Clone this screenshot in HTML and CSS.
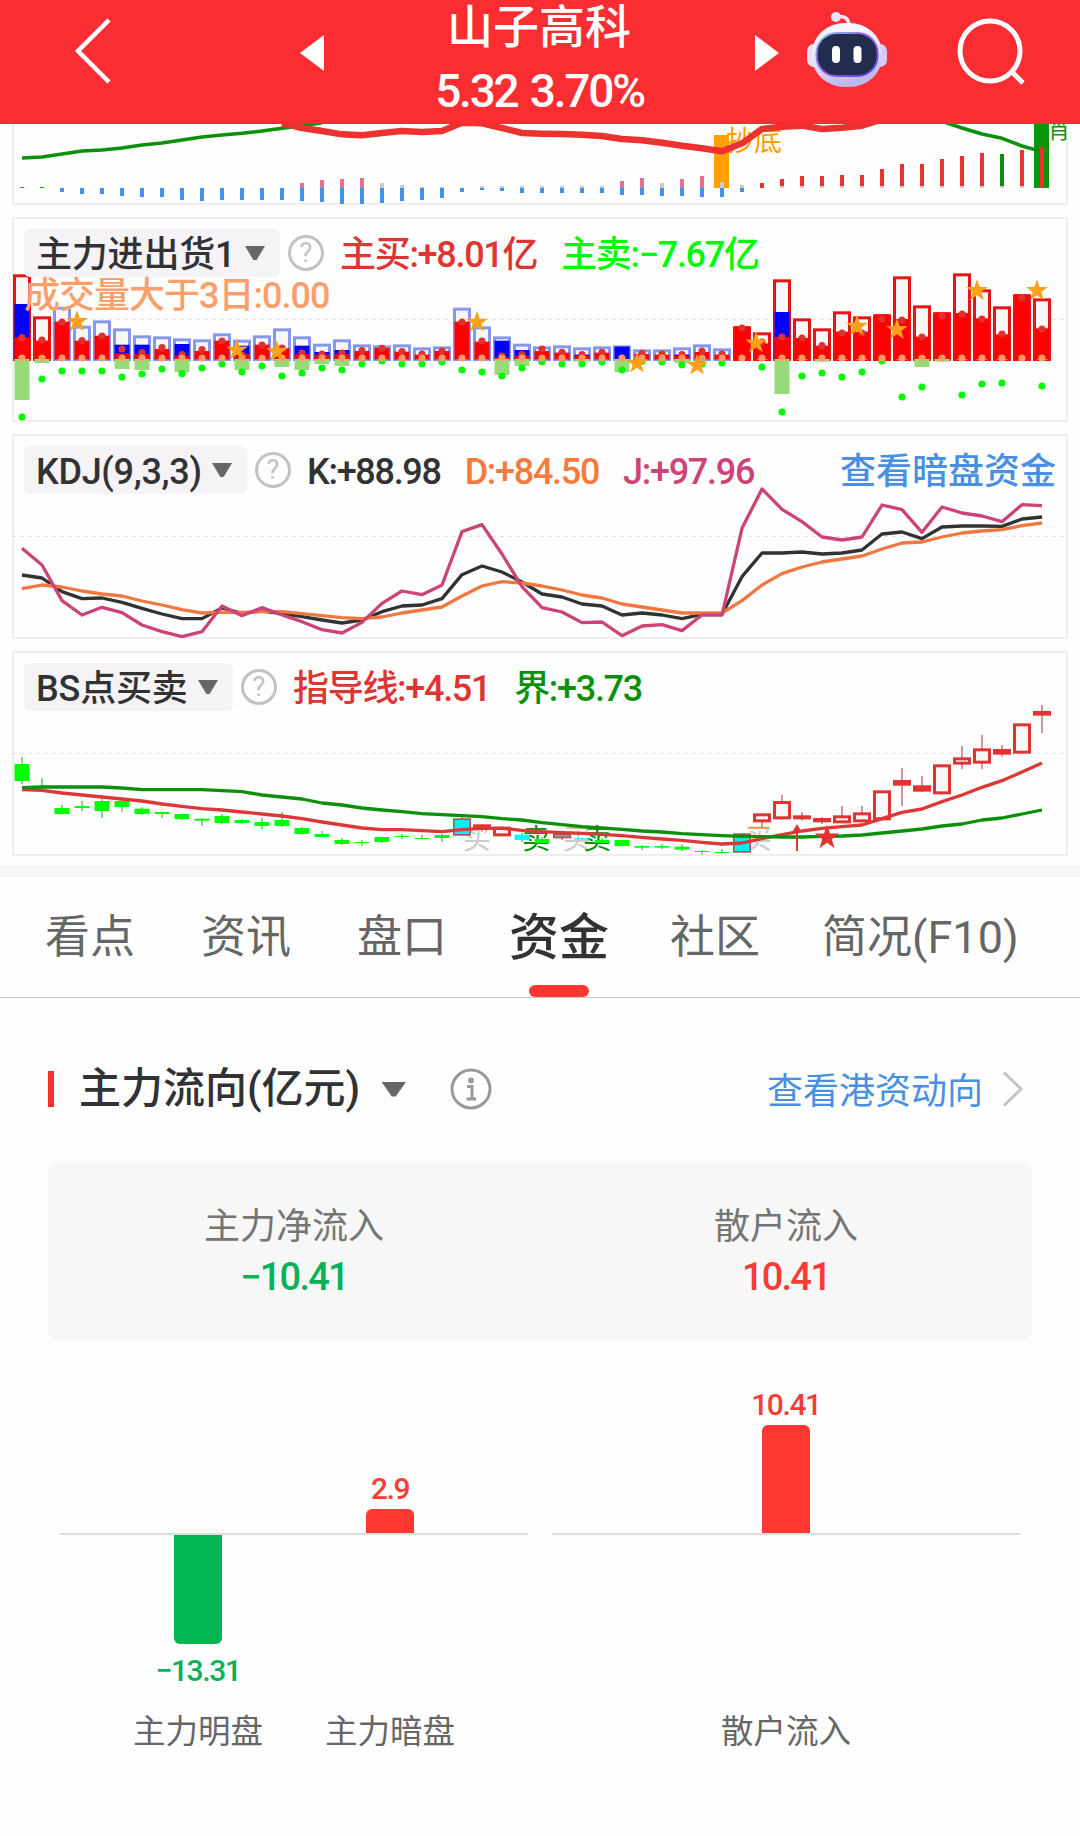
FILE: index.html
```html
<!DOCTYPE html>
<html lang="zh-CN">
<head>
<meta charset="UTF-8">
<meta name="viewport" content="width=device-width, initial-scale=1.0">
<title>山子高科</title>
<link rel="stylesheet" href="styles.css">
</head>
<body>

<header class="topbar">
  <svg class="back" width="40" height="70" viewBox="0 0 40 70"><path d="M36 4 L5 35 L36 66" fill="none" stroke="#fff" stroke-width="4.5"/></svg>
  <svg class="prev" width="24" height="36" viewBox="0 0 24 36"><path d="M0 18 L24 0 V36 Z" fill="#fff"/></svg>
  <div class="stock">
    <div class="stock-name">山子高科</div>
    <div class="stock-price">5.32 3.70%</div>
  </div>
  <svg class="next" width="24" height="36" viewBox="0 0 24 36"><path d="M24 18 L0 0 V36 Z" fill="#fff"/></svg>
  <svg class="robot" width="82" height="78" viewBox="0 0 82 78">
    <defs>
      <linearGradient id="shell" x1="0" y1="0" x2="0.3" y2="1">
        <stop offset="0" stop-color="#ffffff"/>
        <stop offset="0.55" stop-color="#e9e5fa"/>
        <stop offset="1" stop-color="#bdb9ee"/>
      </linearGradient>
      <linearGradient id="rim" x1="0" y1="0" x2="1" y2="1">
        <stop offset="0" stop-color="#7fd3ee"/>
        <stop offset="0.5" stop-color="#9a4fe0"/>
        <stop offset="1" stop-color="#5a48e0"/>
      </linearGradient>
    </defs>
    <path d="M30 6 Q43 3 43 16" fill="none" stroke="#eeeafa" stroke-width="3.5"/>
    <circle cx="30" cy="6" r="5" fill="#e9e4f8"/>
    <rect x="1" y="33" width="16" height="23" rx="7" fill="#e4e0f8"/>
    <rect x="65" y="33" width="16" height="23" rx="7" fill="#d2cdf4"/>
    <rect x="6" y="12" width="70" height="64" rx="33" ry="30" fill="url(#shell)"/>
    <rect x="10.500" y="22" width="61" height="43" rx="20" fill="#222c4e" stroke="url(#rim)" stroke-width="2"/>
    <rect x="26" y="35" width="8" height="17" rx="4" fill="#fff"/>
    <rect x="47.500" y="35" width="8" height="17" rx="4" fill="#fff"/>
  </svg>
  <svg class="search" width="70" height="70" viewBox="0 0 70 70"><circle cx="33" cy="33" r="30" fill="none" stroke="#fff" stroke-width="5"/><path d="M54 53 L66 65" stroke="#fff" stroke-width="5"/></svg>
</header>

<main>
  <section class="panel panel-cut">
    <svg class="chart" id="chart-trend" width="1056" height="81"></svg>
  </section>

  <section class="panel">
    <svg class="chart" id="chart-volume" width="1056" height="205"></svg>
    <div class="legend">
      <span class="picker"><span class="name">主力进出货1</span><i class="caret"></i></span>
      <span class="help">?</span>
      <span class="val red">主买:+8.01亿</span>
      <span class="val lime">主卖:−7.67亿</span>
    </div>
    <div class="legend-extra">成交量大于3日:0.00</div>
  </section>

  <section class="panel">
    <svg class="chart" id="chart-kdj" width="1056" height="205"></svg>
    <div class="legend">
      <span class="picker picker-kdj"><span class="name">KDJ(9,3,3)</span><i class="caret"></i></span>
      <span class="help">?</span>
      <span class="val dark">K:+88.98</span>
      <span class="val orange">D:+84.50</span>
      <span class="val pink">J:+97.96</span>
      <a class="legend-link">查看暗盘资金</a>
    </div>
  </section>

  <section class="panel">
    <svg class="chart" id="chart-bs" width="1056" height="205"></svg>
    <div class="legend">
      <span class="picker picker-bs"><span class="name">BS点买卖</span><i class="caret"></i></span>
      <span class="help">?</span>
      <span class="val red">指导线:+4.51</span>
      <span class="val green">界:+3.73</span>
    </div>
  </section>

  <nav class="tabs">
    <a class="tab">看点</a>
    <a class="tab">资讯</a>
    <a class="tab">盘口</a>
    <a class="tab active">资金</a>
    <a class="tab">社区</a>
    <a class="tab tab-last">简况(F10)</a>
  </nav>

  <section class="flow">
    <div class="flow-head">
      <i class="mark"></i>
      <h2>主力流向(亿元)</h2>
      <i class="caret caret-lg"></i>
      <svg class="info" width="42" height="42" viewBox="0 0 42 42">
        <circle cx="21" cy="21" r="19" fill="none" stroke="#999" stroke-width="3"/>
        <circle cx="21" cy="12.500" r="3" fill="#999"/>
        <path d="M17 18.500 H22 V31 M16.500 31 H26" fill="none" stroke="#999" stroke-width="3"/>
      </svg>
      <a class="flow-link">查看港资动向</a>
      <svg class="arrow" width="22" height="36" viewBox="0 0 22 36"><path d="M2 1.500 L19 18 L2 34.500" fill="none" stroke="#c4c4c4" stroke-width="3"/></svg>
    </div>

    <div class="summary">
      <div class="summary-item">
        <div class="summary-label">主力净流入</div>
        <div class="summary-num down">−10.41</div>
      </div>
      <div class="summary-item">
        <div class="summary-label">散户流入</div>
        <div class="summary-num up">10.41</div>
      </div>
    </div>

    <div class="plots">
      <div class="plot">
        <div class="plot-up">
          <div class="col"></div>
          <div class="col"><span class="num up">2.9</span><i class="bar bar-up" style="height:24px"></i></div>
        </div>
        <div class="plot-down">
          <div class="col"><i class="bar bar-down" style="height:109px"></i><span class="num down">−13.31</span></div>
          <div class="col"></div>
        </div>
        <div class="plot-names"><span class="col">主力明盘</span><span class="col">主力暗盘</span></div>
      </div>
      <div class="plot">
        <div class="plot-up">
          <div class="col"><span class="num up">10.41</span><i class="bar bar-up" style="height:108px"></i></div>
        </div>
        <div class="plot-down"><div class="col"></div></div>
        <div class="plot-names"><span class="col">散户流入</span></div>
      </div>
    </div>
  </section>
</main>

<script src="charts.js"></script>
</body>
</html>
```

FILE: styles.css
```css
* {
  box-sizing: border-box;
}

body {
  margin: 0;
  width: 1080px;
  height: 1836px;
  overflow: hidden;
  background: #fefefe;
  color: #303233;
  font-family: Roboto, "Noto Sans CJK SC", sans-serif;
}

i {
  font-style: normal;
}

h2 {
  margin: 0;
}

/* top bar */
.topbar {
  display: flex;
  align-items: flex-start;
  height: 124px;
  background: #fa2d32;
  color: #fff;
}

.back {
  margin: 16px 0 0 73px;
}

.prev {
  margin: 35px 0 0 187px;
}

.stock {
  width: 431px;
  text-align: center;
  white-space: nowrap;
}

.stock-name {
  height: 60px;
  padding-right: 1px;
  font-size: 46px;
  font-weight: 500;
  line-height: 55px;
}

.stock-price {
  font-size: 46px;
  line-height: 62px;
  font-weight: 500;
  letter-spacing: -2.2px;
  word-spacing: 3px;
}

.next {
  margin-top: 35px;
}

.robot {
  margin: 11px 0 0 27px;
}

.search {
  margin: 18px 0 0 69px;
}

/* indicator panels */
.panel {
  position: relative;
  height: 205px;
  margin: 0 12px 12px;
  border: 2px solid #eee;
}

.panel-cut {
  height: 81px;
  border-top: 0;
}

.chart {
  position: absolute;
  top: -2px;
  left: -2px;
}

.panel-cut .chart {
  top: 0;
}

.legend {
  position: relative;
  display: flex;
  align-items: center;
  height: 48px;
  margin: 10px 10px 0;
  font-size: 36px;
  font-weight: 500;
  line-height: 48px;
  white-space: nowrap;
}

.picker {
  display: flex;
  align-items: center;
  justify-content: space-between;
  width: 256px;
  height: 48px;
  padding: 0 15px 0 12px;
  border-radius: 6px;
  background: #f6f3f7;
}

.name,
.val,
.legend-link {
  padding-top: 3px;
}

.name {
  letter-spacing: -0.2px;
}

.picker-kdj {
  width: 223px;
}

.picker-kdj .name {
  letter-spacing: -0.3px;
}

.picker-bs {
  width: 209px;
}

.caret {
  width: 20px;
  height: 14px;
  background: #666;
  clip-path: polygon(0 0, 100% 0, 58% 100%, 42% 100%);
}

.help {
  width: 36px;
  height: 36px;
  margin: 0 16px 0 8px;
  border: 3px solid #c2c2c2;
  border-radius: 50%;
  color: #c2c2c2;
  font-size: 27px;
  font-weight: 400;
  line-height: 31px;
  text-align: center;
}

.val {
  margin-right: 24px;
  letter-spacing: -1.3px;
}

.legend-link {
  margin-left: auto;
  color: #4a90e2;
}

.legend-extra {
  position: relative;
  margin: -4px 0 0 10px;
  color: #fa9f6b;
  font-size: 36px;
  font-weight: 500;
  line-height: 46px;
  letter-spacing: -1px;
}

.red { color: #e03434; }
.lime { color: #00fa00; }
.dark { color: #303233; }
.orange { color: #f57a3d; }
.pink { color: #cc4378; }
.green { color: #0a900a; }

/* tabs */
.tabs {
  display: flex;
  height: 133px;
  margin-top: -3px;
  padding: 0 45px;
  border-top: 12px solid #f6f6f6;
  border-bottom: 1px solid #c8c8c8;
  white-space: nowrap;
}

.tab {
  margin-right: 66px;
  color: #666;
  font-size: 45px;
  line-height: 122px;
}

.tab.active {
  position: relative;
  margin: 0 61px 0 -4px;
  color: #303233;
  font-size: 50px;
  font-weight: 500;
}

.tab.active::after {
  content: "";
  position: absolute;
  left: 50%;
  bottom: 0;
  width: 60px;
  height: 12px;
  margin-left: -30px;
  border-radius: 6px;
  background: #ff3932;
}

.tab-last {
  margin: 0 0 0 -4px;
}

/* capital flow */
.flow-head {
  display: flex;
  align-items: center;
  height: 60px;
  margin: 61px 56px 0 48px;
}

.mark {
  width: 6px;
  height: 36px;
  margin-right: 25px;
  background: #f5302e;
}

.flow-head h2 {
  font-size: 42px;
  font-weight: 500;
  line-height: 60px;
}

.caret-lg {
  width: 25px;
  height: 15px;
  margin-left: 21px;
}

.info {
  margin-left: 44px;
}

.flow-link {
  margin: -3px 19px 0 auto;
  color: #4a90e2;
  font-size: 36px;
}

.summary {
  display: flex;
  height: 180px;
  margin: 42px 48px 0;
  padding-top: 42px;
  border-radius: 12px;
  background: #f7f7f7;
  text-align: center;
}

.summary-item {
  width: 492px;
}

.summary-label {
  color: #757575;
  font-size: 36px;
  line-height: 48px;
}

.summary-num {
  font-size: 38px;
  font-weight: 500;
  line-height: 52px;
  letter-spacing: -1.8px;
}

.up { color: #f53c35; }
.down { color: #07b155; }

.plots {
  display: flex;
  gap: 24px;
  padding: 0 60px;
}

.plot {
  width: 468px;
}

.plot-up,
.plot-down,
.plot-names {
  display: flex;
  justify-content: center;
}

.plot-up {
  height: 194px;
  border-bottom: 2px solid #ddd;
}

.plot-down {
  height: 173px;
}

.col {
  display: flex;
  flex-direction: column;
  align-items: center;
  width: 192px;
}

.plot-up .col {
  justify-content: flex-end;
}

.num {
  font-size: 30px;
  font-weight: 500;
  line-height: 38px;
  letter-spacing: -1.4px;
}

.plot-up .num {
  margin-bottom: 1px;
}

.plot-down .num {
  margin-top: 8px;
}

.bar {
  width: 48px;
}

.bar-up {
  border-radius: 6px 6px 0 0;
  background: #ff3932;
}

.bar-down {
  border-radius: 0 0 6px 6px;
  background: #00b652;
}

.plot-names {
  color: #666;
  font-size: 32.5px;
  line-height: 48px;
}
```

FILE: charts.js
```javascript
// every chart has 52 columns, 20px apart; heights are stored in thirds of a pixel
var STEP = 20;
var FIRST = 10;

function colX(i) {
  return FIRST + i * STEP;
}

function Chart(id, offset) {
  this.el = document.getElementById(id);
  this.offset = offset;
}

Chart.prototype.y = function(v) {
  return v / 3 - this.offset;
};

Chart.prototype.add = function(name, attrs, text) {
  var node = document.createElementNS("http://www.w3.org/2000/svg", name);
  for (var key in attrs) {
    node.setAttribute(key, attrs[key]);
  }
  if (text) {
    node.textContent = text;
  }
  this.el.appendChild(node);
};

Chart.prototype.rect = function(x, top, w, bottom, color) {
  this.add("rect", { x: x, y: this.y(top), width: w, height: (bottom - top) / 3, fill: color });
};

Chart.prototype.line = function(values, color, width, start) {
  var self = this;
  var points = values.map(function(v, i) {
    return colX(i + (start || 0)) + "," + self.y(v);
  }).join(" ");
  this.add("polyline", { points: points, fill: "none", stroke: color, "stroke-width": width, "stroke-linejoin": "round" });
};

Chart.prototype.dash = function(v) {
  this.add("line", { x1: 0, x2: 1056, y1: this.y(v), y2: this.y(v), stroke: "#ddd", "stroke-width": 1, "stroke-dasharray": "4 4" });
};

Chart.prototype.star = function(x, v, r, color) {
  var points = [];
  for (var k = 0; k < 10; k++) {
    var a = Math.PI * k / 5 - Math.PI / 2;
    var d = k % 2 ? r * 0.39 : r;
    points.push((x + d * Math.cos(a)).toFixed(1) + "," + (this.y(v) + d * Math.sin(a)).toFixed(1));
  }
  this.add("polygon", { points: points.join(" "), fill: color });
};

Chart.prototype.label = function(x, v, size, color, text) {
  this.add("text", { x: x, y: this.y(v), "font-size": size, fill: color }, text);
};

// trend
var trend = new Chart("chart-trend", 124);
trend.rect(702, 405, 15, 564, "#ff9f00");
trend.rect(1022, 360, 15, 564, "#0a960a");
trend.label(714, 452, 28, "#ff9f00", "抄底");
trend.label(1036, 414, 22, "#0a960a", "肖");
trend.line([474, 471, 462, 453, 450, 444, 435, 429, 420, 411, 405, 400, 393, 385, 378, 368], "#0a900a", 3.5);
trend.line([364, 384, 402, 415, 438, 455], "#0a900a", 3.5, 46);
trend.line([369, 384, 393, 403, 406, 399, 393, 396, 393, 368, 370, 384, 399, 401, 402, 404, 408, 417, 421, 428, 437, 445, 454, 430, 387, 380, 377, 387, 383, 377, 358], "#eb322f", 6.5, 13);

// upper bar: top and colour
var upper = {
  0: [561, "r"], 1: [561, "g"], 14: [549, "p"], 15: [540, "p"], 16: [537, "p"], 17: [534, "p"], 18: [549, "s"], 19: [555, "s"],
  20: [561, "s"], 21: [561, "s"], 23: [558, "s"], 24: [558, "s"], 25: [558, "s"], 26: [558, "s"], 27: [558, "s"], 28: [558, "s"],
  29: [558, "s"], 30: [543, "p"], 31: [534, "p"], 32: [549, "s"], 33: [537, "p"], 34: [528, "p"], 35: [546, "s"], 36: [555, "s"],
  37: [549, "r"], 38: [537, "r"], 39: [528, "r"], 40: [528, "r"], 41: [525, "r"], 42: [525, "r"], 43: [507, "r"], 44: [492, "r"],
  45: [492, "r"], 46: [477, "r"], 47: [468, "r"], 48: [459, "r"], 49: [462, "g"], 50: [450, "r"], 51: [442, "r"]
};
var upperColors = { r: "#eb322f", g: "#0a900a", p: "#e8708e", s: "#ccc" };
for (var key in upper) {
  trend.rect(colX(+key) - 2, upper[key][0], 4, 564, upperColors[upper[key][1]]);
  if (+key > 37 && +key < 51) {
    trend.rect(colX(+key) - 2, 558, 4, 564, "#ddc4c4");
  }
}
[576, 582, 582, 588, 591, 591, 600, 603, 600, 600, 600, 600, 603, 606, 612, 612, 609, 603, 600, 594, 576, 570, 573, 579, 579, 579, 579, 579, 585, 585, 588, 588, 591, 591, 576].forEach(function(v, i) {
  trend.rect(colX(i + 2) - 2, 564, 4, v, "#4092ef");
});

// volume: outline colour, outline top, blue top, red top, red dot, sell bar bottom, sell dot
var volume = [
  ["r", 193, 282, 382, 383, 570, 621], ["r", 319, 0, 392, 390, 459, 507], ["b", 290, 0, 335, 336, 0, 483],
  ["b", 347, 0, 392, 392, 0, 483], ["b", 331, 0, 377, 378, 0, 483], ["b", 355, 404, 430, 417, 477, 501],
  ["b", 376, 404, 432, 428, 480, 492], ["b", 379, 0, 417, 413, 0, 477], ["b", 385, 402, 437, 434, 486, 491],
  ["b", 388, 0, 423, 419, 0, 474], ["b", 370, 0, 392, 393, 0, 462], ["b", 389, 407, 432, 435, 480, 486],
  ["b", 376, 0, 404, 405, 0, 468], ["b", 355, 0, 414, 414, 471, 498], ["b", 379, 407, 432, 429, 480, 489],
  ["b", 401, 426, 434, 432, 462, 474], ["b", 388, 420, 432, 429, 468, 480], ["b", 403, 0, 423, 422, 0, 462],
  ["b", 406, 0, 414, 415, 0, 453], ["b", 403, 0, 425, 425, 0, 462], ["b", 412, 0, 434, 432, 0, 462],
  ["b", 409, 0, 423, 423, 0, 456], ["b", 293, 0, 335, 336, 0, 480], ["b", 349, 0, 395, 393, 0, 486],
  ["b", 379, 392, 442, 438, 495, 498], ["b", 401, 420, 437, 434, 468, 474], ["b", 409, 0, 423, 417, 0, 455],
  ["b", 406, 0, 428, 427, 0, 462], ["b", 412, 434, 438, 434, 455, 462], ["b", 409, 0, 428, 427, 0, 456],
  ["b", 406, 410, 447, 0, 486, 480], ["b", 418, 0, 432, 430, 0, 454], ["b", 418, 0, 434, 432, 0, 456],
  ["b", 412, 434, 438, 434, 459, 464], ["b", 403, 0, 426, 423, 0, 462], ["b", 415, 0, 434, 432, 0, 459],
  ["r", 349, 0, 349, 354, 0, 0], ["r", 367, 0, 400, 396, 0, 471], ["r", 208, 306, 381, 381, 552, 606],
  ["r", 325, 0, 384, 384, 0, 498], ["r", 355, 0, 407, 407, 455, 489], ["r", 304, 0, 365, 369, 0, 501],
  ["r", 319, 0, 365, 369, 0, 486], ["r", 313, 0, 313, 327, 0, 453], ["r", 199, 0, 327, 330, 0, 561],
  ["r", 286, 0, 380, 381, 471, 531], ["r", 307, 0, 307, 318, 455, 0], ["r", 190, 0, 309, 312, 0, 555],
  ["r", 238, 0, 325, 327, 0, 522], ["r", 289, 0, 373, 372, 0, 519], ["r", 253, 0, 253, 264, 0, 0],
  ["r", 265, 0, 355, 357, 0, 528]
];
var vol = new Chart("chart-volume", 7);
vol.dash(328);
volume.forEach(function(d, i) {
  var x = colX(i);
  vol.rect(x - 9, d[1], 18, 453, d[0] === "r" ? "#e61414" : "#8598ee");
  if (d[1] !== d[3]) {
    vol.rect(x - 6, d[1] + 9, 12, 450, "#f8f8f8");
  }
  if (d[2]) {
    vol.rect(x - 7.5, d[2], 15, 447, "#0000ff");
  }
  vol.rect(x - 7.5, d[3], 15, 449, "#ff0000");
  if (d[5]) {
    vol.rect(x - 7.5, 447, 15, d[5], "#95dc78");
  }
  if (d[6]) {
    vol.add("circle", { cx: x, cy: vol.y(d[6]), r: 3.6, fill: "#00fa00" });
  }
  if (d[4]) {
    vol.add("circle", { cx: x, cy: vol.y(d[4]), r: 3.6, fill: "#e03030" });
  }
  vol.add("circle", { cx: x, cy: vol.y(444), r: 3.6, fill: "#ff9766" });
});
[[65, 335], [465, 337], [225, 420], [265, 425], [625, 460], [685, 466], [744, 399], [845, 349], [885, 359], [965, 242], [1025, 242]].forEach(function(s) {
  vol.star(s[0], s[1], 11.5, "#ff9f1a");
});

// kdj
var kdj = new Chart("chart-kdj", 9);
kdj.dash(334);
kdj.line([450, 459, 500, 521, 519, 532, 550, 567, 581, 581, 549, 565, 558, 566, 575, 585, 594, 585, 560, 543, 540, 521, 449, 423, 441, 471, 507, 516, 537, 543, 570, 564, 570, 581, 568, 568, 455, 384, 384, 381, 387, 384, 375, 327, 321, 341, 306, 303, 303, 304, 282, 276], "#303233", 3.3);
kdj.line([491, 480, 486, 498, 507, 513, 528, 540, 554, 564, 562, 562, 560, 560, 566, 572, 578, 581, 576, 564, 555, 546, 513, 483, 470, 474, 483, 495, 510, 519, 537, 546, 555, 564, 564, 564, 527, 480, 446, 426, 411, 402, 393, 372, 354, 351, 336, 324, 318, 314, 302, 294], "#f07840", 3.3);
kdj.line([370, 420, 527, 570, 547, 563, 600, 620, 635, 620, 543, 572, 548, 570, 590, 614, 624, 592, 535, 498, 509, 480, 320, 299, 387, 485, 548, 561, 593, 591, 632, 603, 599, 617, 570, 570, 310, 192, 253, 290, 336, 345, 336, 240, 254, 322, 246, 264, 273, 290, 239, 242], "#cc4378", 3.3);

// bs candles: type, high, top, bottom, low
var candles = [
  ["g", 336, 357, 408, 417], ["w", 400, 400, 425, 425], ["g", 480, 489, 507, 507], ["g", 468, 483, 489, 498], ["g", 460, 468, 498, 519],
  ["g", 466, 468, 486, 501], ["g", 487, 491, 507, 509], ["g", 500, 501, 507, 519], ["g", 505, 507, 522, 525], ["g", 520, 521, 527, 543],
  ["g", 507, 513, 534, 537], ["g", 522, 525, 534, 536], ["g", 519, 531, 543, 552], ["g", 501, 525, 543, 546], ["g", 546, 549, 567, 569],
  ["g", 558, 567, 576, 576], ["g", 579, 585, 597, 600], ["g", 585, 591, 594, 602], ["g", 575, 576, 591, 594], ["g", 567, 573, 576, 582],
  ["g", 570, 579, 582, 582], ["g", 567, 570, 579, 591], ["c", 515, 520, 572, 572], ["r", 537, 538, 553, 560], ["r", 543, 545, 574, 574],
  ["y", 563, 569, 585, 591], ["g", 576, 582, 594, 594], ["s", 565, 566, 580, 585], ["y", 578, 580, 584, 584], ["g", 580, 585, 594, 594],
  ["g", 585, 585, 603, 603], ["g", 600, 603, 608, 614], ["g", 597, 603, 608, 612], ["g", 598, 605, 614, 619], ["g", 615, 618, 621, 630],
  ["g", 612, 621, 624, 624], ["c", 565, 565, 623, 623], ["r", 505, 505, 532, 549], ["r", 450, 468, 523, 525], ["r", 501, 511, 523, 527],
  ["r", 516, 519, 532, 537], ["r", 483, 511, 535, 535], ["r", 483, 502, 532, 532], ["r", 436, 436, 526, 526], ["r", 369, 405, 422, 483],
  ["r", 393, 421, 440, 440], ["r", 358, 358, 448, 448], ["r", 303, 337, 359, 372], ["r", 270, 310, 356, 372], ["r", 300, 312, 329, 335],
  ["r", 235, 235, 326, 326], ["r", 180, 198, 212, 264]
];
var bs = new Chart("chart-bs", 6);
bs.dash(325);
[[451, "#ccc", "买"], [551, "#ccc", "买"], [732, "#ccc", "买"], [510, "#0a900a", "卖"], [571, "#0a900a", "卖"]].forEach(function(m) {
  bs.label(m[0], 613, 28, m[1], m[2]);
});
bs.rect(737, 545, 20, 552, "#e8a050");
bs.rect(557, 547, 20, 552, "#e8b878");
candles.forEach(function(d, i) {
  var x = colX(i);
  var red = d[0] === "r" || d[0] === "c" || d[0] === "s";
  bs.rect(x - 1, d[1], 2, d[4], red ? "#d09898" : "#80dc80");
  if (d[0] === "g" || d[0] === "y") {
    bs.rect(x - 7.5, d[2], 15, d[3], d[0] === "g" ? "#00ff00" : "#00ffff");
  } else if (red) {
    bs.rect(x - 9, d[2], 18, d[3], d[0] === "r" ? "#e03434" : "#b05050");
    if (d[0] !== "r") {
      bs.rect(x - 7.5, d[2] + 5, 15, d[3] - 5, d[0] === "c" ? "#00f0f8" : "#8ab4b4");
    } else if (d[3] - d[2] > 20) {
      bs.rect(x - 6, d[2] + 9, 12, d[3] - 9, "#f8f8f8");
    }
  }
});
bs.line([434, 436, 444, 450, 456, 462, 468, 477, 484, 491, 495, 501, 507, 513, 521, 531, 540, 549, 554, 554, 557, 560, 554, 550, 550, 556, 560, 563, 565, 568, 572, 577, 582, 586, 592, 597, 594, 581, 569, 558, 550, 545, 540, 521, 502, 492, 470, 450, 427, 407, 381, 354], "#dc3838", 3.3);
bs.line([428, 426, 426, 426, 426, 429, 434, 434, 434, 434, 437, 440, 450, 456, 462, 474, 480, 489, 495, 500, 506, 509, 512, 515, 521, 525, 533, 539, 545, 549, 553, 558, 561, 566, 569, 572, 574, 575, 576, 576, 574, 573, 570, 564, 558, 552, 543, 537, 525, 519, 507, 495], "#0a900a", 3.3);
bs.rect(784, 555, 2, 618, "#e03434");
bs.add("path", { d: "M785 173 L789 180 H781 Z", fill: "#e03434" });
bs.star(815, 578, 13, "#e03434");
```
